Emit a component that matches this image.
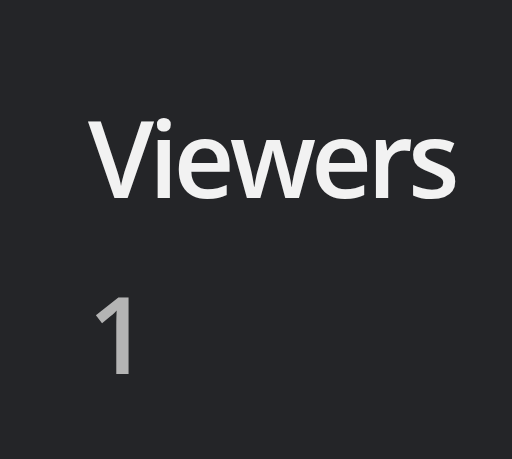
import React from 'react';

const App = () => {
  return (
    <div className="w-[512px] h-[459px] bg-[#242528] pl-[88px] pt-[104px] font-['Open_Sans',Arial,sans-serif] font-semibold overflow-hidden">
      <div className="text-[106px] leading-[106px] tracking-[-5px] text-[#f2f2f2]">Viewers</div>
      <div className="mt-[70px] text-[106px] leading-[106px] text-[#b4b4b4]">1</div>
    </div>
  )
}

export default App;
